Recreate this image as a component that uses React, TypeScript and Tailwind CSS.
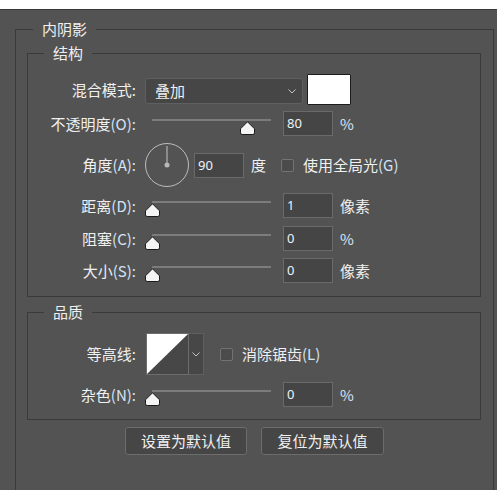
import React from "react";

const TEXT = "text-[#f0f0f0]";

function Latin({ children }: { children: React.ReactNode }) {
  return <span className="text-[#d3e5f7]">{children}</span>;
}

function Thumb() {
  return (
    <svg width="15" height="14" viewBox="0 0 15 14" className="block">
      <path
        d="M2.2 13.5 Q0.5 13.5 0.5 11.8 V7.8 L7.5 0.8 L14.5 7.8 V11.8 Q14.5 13.5 12.8 13.5 Z"
        fill="#f4f4f4"
        stroke="#1a1a1a"
        strokeWidth="1"
      />
    </svg>
  );
}

function Slider({ value }: { value: number }) {
  return (
    <div className="relative w-[133px] h-full pt-[8px]">
      <div className="mx-[7px] h-[2px] bg-[#7c7c7c]" />
      <div className="absolute top-[10px]" style={{ left: Math.round(value * 119) }}>
        <Thumb />
      </div>
    </div>
  );
}

function Input({ value }: { value: string }) {
  return (
    <div className="w-[50px] h-[25px] bg-[#454545] border border-[#6a6a6a] flex items-center pl-[3px] font-['Noto_Sans',sans-serif] text-[13px] text-[#eef4fb] leading-none">
      {value}
    </div>
  );
}

function Chevron() {
  return (
    <svg width="8" height="5" viewBox="0 0 8 5" className="block">
      <path d="M0.5 0.5 L4 4 L7.5 0.5" fill="none" stroke="#c4c4c4" strokeWidth="1" />
    </svg>
  );
}

function Checkbox() {
  return <div className="w-[13px] h-[13px] rounded-[2px] border border-[#737373] bg-[#4b4b4b]" />;
}

function Label({ children }: { children: React.ReactNode }) {
  return <div className="w-[108px] text-right leading-[20px] whitespace-nowrap">{children}</div>;
}

function SliderRow({
  label,
  letter,
  value,
  pos,
  unit,
  mt,
}: {
  label: string;
  letter: string;
  value: string;
  pos: number;
  unit: string;
  mt: string;
}) {
  return (
    <div className={`flex items-center h-[25px] ${mt}`}>
      <Label>
        {label}
        <Latin>({letter}):</Latin>
      </Label>
      <div className="ml-[9px] h-full">
        <Slider value={pos} />
      </div>
      <div className="ml-[5px]">
        <Input value={value} />
      </div>
      <div className="ml-[7px] leading-[20px]">
        {unit === "%" ? <Latin>%</Latin> : unit}
      </div>
    </div>
  );
}

function Dial() {
  return (
    <svg width="44" height="44" viewBox="0 0 44 44" className="block">
      <circle cx="22" cy="22" r="21.5" fill="none" stroke="#bdbdbd" strokeWidth="1" />
      <line x1="22" y1="3" x2="22" y2="22" stroke="#c4c4c4" strokeWidth="1" />
      <circle cx="22" cy="22" r="2.5" fill="#b8b8b8" />
    </svg>
  );
}

function Legend({ children, left }: { children: React.ReactNode; left: string }) {
  return (
    <span className={`absolute ${left} top-[-11px] px-[9px] bg-[#535353] leading-[20px]`}>
      {children}
    </span>
  );
}

export default function App() {
  return (
    <div
      className={`w-[497px] h-[490px] overflow-hidden bg-[#535353] ${TEXT} text-[15px] font-['Noto_Sans_CJK_SC','Noto_Sans',sans-serif]`}
    >
      <div className="h-[9px] bg-white" />
      <div className="h-px bg-[#383838]" />
      <div className="relative ml-[15px] mt-[19px] w-[479px] h-[480px] border border-[#3a3a3a]">
        <Legend left="left-[17px]">内阴影</Legend>

        {/* 结构 */}
        <div className="relative ml-[11px] mt-[23px] w-[454px] h-[244px] border border-[#3a3a3a] pt-[20px]">
          <Legend left="left-[16px]">结构</Legend>

          <div className="flex items-start h-[31px]">
            <div className="self-center">
              <Label>混合模式:</Label>
            </div>
            <div className="ml-[9px] mt-[4px] w-[158px] h-[26px] rounded-[3px] bg-[#464646] border border-[#5f5f5f] flex items-center pl-[9px] pr-[6px] justify-between">
              <span className="leading-[20px]">叠加</span>
              <Chevron />
            </div>
            <div className="ml-[4px] w-[44px] h-[31px] bg-white border border-[#1c1c1c] rounded-[1px]" />
          </div>

          <SliderRow label="不透明度" letter="O" value="80" pos={0.8} unit="%" mt="mt-[6px]" />

          <div className="flex items-center h-[44px] mt-[7px]">
            <Label>
              角度<Latin>(A):</Latin>
            </Label>
            <div className="ml-[9px] w-[44px] h-[44px]">
              <Dial />
            </div>
            <div className="ml-[5px]">
              <Input value="90" />
            </div>
            <div className="ml-[7px] leading-[20px]">度</div>
            <div className="ml-[15px]">
              <Checkbox />
            </div>
            <div className="ml-[9px] leading-[20px] whitespace-nowrap">
              使用全局光<Latin>(G)</Latin>
            </div>
          </div>

          <SliderRow label="距离" letter="D" value="1" pos={0} unit="像素" mt="mt-[6px]" />
          <SliderRow label="阻塞" letter="C" value="0" pos={0} unit="%" mt="mt-[8px]" />
          <SliderRow label="大小" letter="S" value="0" pos={0} unit="像素" mt="mt-[7px]" />
        </div>

        {/* 品质 */}
        <div className="relative ml-[11px] mt-[15px] w-[454px] h-[108px] border border-[#3a3a3a] pt-[20px]">
          <Legend left="left-[16px]">品质</Legend>

          <div className="flex items-center h-[42px]">
            <Label>等高线:</Label>
            <div className="ml-[10px] flex">
              <div className="w-[43px] h-[42px] border border-[#6c6c6c] bg-[#474747]">
                <svg width="41" height="40" viewBox="0 0 41 40" className="block">
                  <polygon points="0,0 41,0 0,40" fill="#ffffff" />
                </svg>
              </div>
              <div className="w-[15px] h-[42px] border border-[#5f5f5f] border-l-0 bg-[#474747] flex items-center justify-center">
                <Chevron />
              </div>
            </div>
            <div className="ml-[16px]">
              <Checkbox />
            </div>
            <div className="ml-[9px] leading-[20px] whitespace-nowrap">
              消除锯齿<Latin>(L)</Latin>
            </div>
          </div>

          <SliderRow label="杂色" letter="N" value="0" pos={0} unit="%" mt="mt-[7px]" />
        </div>

        <div className="flex ml-[109px] mt-[7px]">
          <div className="w-[122px] h-[28px] rounded-[3px] bg-[#464646] border border-[#6c6c6c] flex items-center justify-center leading-[20px]">
            设置为默认值
          </div>
          <div className="ml-[14px] w-[123px] h-[28px] rounded-[3px] bg-[#464646] border border-[#6c6c6c] flex items-center justify-center leading-[20px]">
            复位为默认值
          </div>
        </div>
      </div>
    </div>
  );
}
